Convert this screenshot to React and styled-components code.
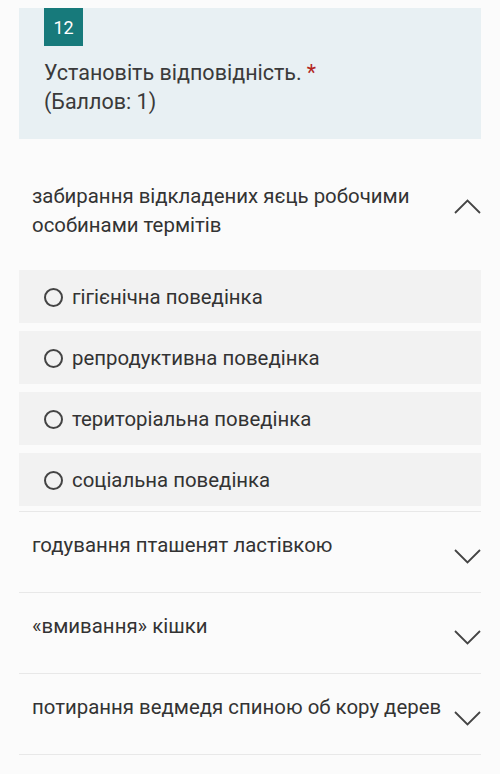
import React from 'react'
import { styled, createGlobalStyle } from 'styled-components'

const GlobalStyle = createGlobalStyle`
  html, body {
    margin: 0;
    padding: 0;
    background: #fbfbfb;
  }
  body {
    font-family: Roboto, "Noto Sans", sans-serif;
    color: #333;
  }
`

const Page = styled.div`
  padding: 8px 19px 0;
`

const Header = styled.header`
  background: #e8f0f3;
  height: 131px;
  padding: 0 25px;
  box-sizing: border-box;
`

const Badge = styled.div`
  width: 39px;
  height: 38px;
  background: #177a7b;
  color: #fff;
  font-size: 18px;
  display: flex;
  align-items: center;
  justify-content: center;
`

const QuestionText = styled.div`
  margin-top: 12px;
  font-size: 21.5px;
  line-height: 29px;
  color: #3a3a3a;
`

const Star = styled.span`
  color: #b3261e;
  margin-left: 5px;
`

const Row = styled.div`
  border-bottom: ${p => (p.$open ? 'none' : '1px solid #e8e8e8')};
  padding: ${p => (p.$open ? '43px 0 0' : '19px 0 0')};
  height: ${p => (p.$open ? 'auto' : '81px')};
  box-sizing: border-box;
`

const RowHead = styled.div`
  display: flex;
  justify-content: space-between;
  align-items: flex-start;
`

const RowTitle = styled.div`
  font-size: 20.4px;
  line-height: 29px;
  color: #333;
  padding-left: 13px;
  max-width: 410px;
`

const Chevron = styled.svg`
  flex: none;
  margin-top: ${p => (p.$up ? '17px' : '18px')};
`

const Options = styled.div`
  display: flex;
  flex-direction: column;
  gap: 8px;
  margin-top: 30px;
  padding-bottom: 5px;
  border-bottom: 1px solid #e8e8e8;
`

const Option = styled.label`
  height: 53px;
  background: #f2f2f2;
  display: flex;
  align-items: center;
  padding-left: 25px;
  font-size: 20.4px;
  color: #333;
`

const Radio = styled.span`
  width: 15px;
  height: 15px;
  border: 2px solid #444;
  border-radius: 50%;
  margin-right: 9px;
  margin-top: 1px;
`

const ChevronIcon = ({ up }) => (
  <Chevron $up={up} width="27" height="15" viewBox="0 0 27 15">
    <polyline
      points={up ? '1,14 13.5,1.5 26,14' : '1,1 13.5,13.5 26,1'}
      fill="none"
      stroke="#444"
      strokeWidth="1.8"
    />
  </Chevron>
)

const options = [
  'гігієнічна поведінка',
  'репродуктивна поведінка',
  'територіальна поведінка',
  'соціальна поведінка',
]

const rows = [
  'годування пташенят ластівкою',
  '«вмивання» кішки',
  'потирання ведмедя спиною об кору дерев',
]

const App = () => {
  return (
    <Page>
      <GlobalStyle />
      <Header>
        <Badge>12</Badge>
        <QuestionText>
          Установіть відповідність.<Star>*</Star>
          <br />
          (Баллов: 1)
        </QuestionText>
      </Header>

      <Row $open>
        <RowHead>
          <RowTitle>забирання відкладених яєць робочими особинами термітів</RowTitle>
          <ChevronIcon up />
        </RowHead>
        <Options>
          {options.map(o => (
            <Option key={o}>
              <Radio />
              {o}
            </Option>
          ))}
        </Options>
      </Row>

      {rows.map(r => (
        <Row key={r}>
          <RowHead>
            <RowTitle>{r}</RowTitle>
            <ChevronIcon />
          </RowHead>
        </Row>
      ))}
    </Page>
  )
}

export default App
